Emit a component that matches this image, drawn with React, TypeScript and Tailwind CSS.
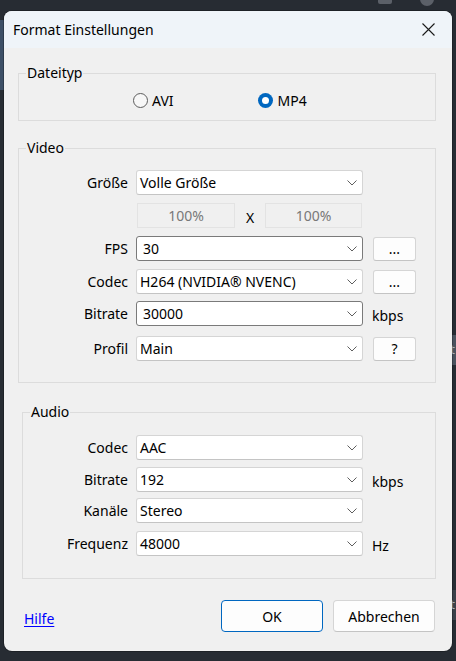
import React from 'react';

const font = { fontFamily: '"Noto Sans", "Open Sans", Arial, sans-serif' };

type ComboProps = {
  value: string;
  editable?: boolean;
};

// Windows-style drop-down; editable ones get the darker frame
const Combo: React.FC<ComboProps> = ({ value, editable }) => (
  <div
    className={`flex h-[25px] w-[227px] items-center rounded-[3px] border bg-white ${
      editable ? 'border-[#7a7a7a] pl-[6px]' : 'border-[#d5d5d5] border-b-[#c4c4c4] pl-[3px]'
    }`}
  >
    <span className="flex-1 text-[14px] leading-none text-black">{value}</span>
    <svg width="10" height="6" viewBox="0 0 10 6" className="mr-[5px]">
      <path d="M0.5 0.5 L5 5 L9.5 0.5" fill="none" stroke="#5f5f5f" strokeWidth="1" />
    </svg>
  </div>
);

const SmallButton: React.FC<{ label: string }> = ({ label }) => (
  <div className="ml-[10px] flex h-[24px] w-[43px] items-center justify-center rounded-[3px] border border-[#d5d5d5] border-b-[#c4c4c4] bg-[#fdfdfd] text-[14px] text-black">
    {label}
  </div>
);

type RowProps = {
  label: string;
  labelWidth: string;
  children: React.ReactNode;
  className?: string;
};

const Row: React.FC<RowProps> = ({ label, labelWidth, children, className }) => (
  <div className={`flex items-center ${className ?? ''}`}>
    <span className={`${labelWidth} pr-[8px] text-right text-[14px] text-black`}>{label}</span>
    {children}
  </div>
);

const Unit: React.FC<{ text: string }> = ({ text }) => (
  <span className="ml-[9px] mt-[3px] text-[14px] text-black">{text}</span>
);

export default function App() {
  return (
    <div className="relative h-[661px] w-[456px] overflow-hidden bg-[#272c33]" style={font}>
      {/* bits of the window behind the dialog */}
      <div className="absolute left-0 top-[20px] h-[70px] w-[4px] bg-[#3d4f66]" />
      <div className="absolute left-[440px] top-[335px] flex h-[30px] w-[16px] items-center justify-end bg-[#4a525e] pr-[1px] text-[13px] text-[#aab2bd]">st</div>
      <div className="absolute left-[440px] top-[590px] flex h-[30px] w-[16px] items-center justify-end bg-[#3a4049] pr-[1px] text-[13px] text-[#aab2bd]">st</div>
      <div className="absolute left-[378px] top-[-6px] h-[10px] w-[14px] rounded-[2px] bg-[#5b6068]" />
      <div className="absolute left-[420px] top-[-8px] h-[14px] w-[14px] rounded-full bg-[#5b6068]" />

      <div className="absolute left-[4px] top-[11px] flex h-[640px] w-[448px] flex-col overflow-hidden rounded-[8px] bg-[#f0f0f0] shadow-[0_0_0_1px_rgba(0,0,0,0.25)]">
        {/* title bar */}
        <div className="flex h-[37px] shrink-0 items-center bg-[#eff4f9] pl-[9px] pr-[17px]">
          <span className="flex-1 text-[14px] text-black">Format Einstellungen</span>
          <svg width="13" height="13" viewBox="0 0 13 13">
            <path d="M0.5 0.5 L12.5 12.5 M12.5 0.5 L0.5 12.5" stroke="#1a1a1a" strokeWidth="1.1" />
          </svg>
        </div>

        <div className="flex flex-col">
          {/* Dateityp */}
          <fieldset className="ml-[14px] mt-[15px] w-[418px] border border-[#dcdcdc] pb-[10px]">
            <legend className="ml-[7px] px-[1px] text-[14px] leading-[20px] text-black">Dateityp</legend>
            <div className="mt-[7px] flex h-[20px] items-center">
              <div className="ml-[114px] flex items-center">
                <span className="h-[15px] w-[15px] rounded-full border border-[#5c5c5c] bg-[#f7f7f7]" />
                <span className="ml-[4px] text-[14px] text-black">AVI</span>
              </div>
              <div className="ml-[84px] flex items-center">
                <span className="flex h-[15px] w-[15px] items-center justify-center rounded-full bg-[#0067c0]">
                  <span className="h-[7px] w-[7px] rounded-full bg-white" />
                </span>
                <span className="ml-[5px] text-[14px] text-black">MP4</span>
              </div>
            </div>
          </fieldset>

          {/* Video */}
          <fieldset className="ml-[14px] mt-[17px] w-[418px] border border-[#dcdcdc] pb-[21px]">
            <legend className="ml-[7px] px-[1px] text-[14px] leading-[20px] text-black">Video</legend>
            <Row label="Größe" labelWidth="w-[117px]" className="mt-[12px]">
              <Combo value="Volle Größe" />
            </Row>
            <div className="mt-[8px] flex items-center">
              <div className="ml-[118px] flex h-[25px] w-[98px] items-center justify-center border border-[#e3e3e3] text-[14px] text-[#787878]">
                100%
              </div>
              <span className="ml-[10px] mt-[4px] w-[10px] text-center text-[14px] text-black">X</span>
              <div className="ml-[10px] flex h-[25px] w-[97px] items-center justify-center border border-[#e3e3e3] text-[14px] text-[#787878]">
                100%
              </div>
            </div>
            <Row label="FPS" labelWidth="w-[117px]" className="mt-[8px]">
              <Combo value="30" editable />
              <SmallButton label="..." />
            </Row>
            <Row label="Codec" labelWidth="w-[117px]" className="mt-[8px]">
              <Combo value="H264 (NVIDIA® NVENC)" />
              <SmallButton label="..." />
            </Row>
            <Row label="Bitrate" labelWidth="w-[117px]" className="mt-[7px]">
              <Combo value="30000" editable />
              <Unit text="kbps" />
            </Row>
            <Row label="Profil" labelWidth="w-[117px]" className="mt-[10px]">
              <Combo value="Main" />
              <SmallButton label="?" />
            </Row>
          </fieldset>

          {/* Audio */}
          <fieldset className="ml-[18px] mt-[19px] w-[414px] border border-[#dcdcdc] pb-[22px]">
            <legend className="ml-[7px] px-[1px] text-[14px] leading-[20px] text-black">Audio</legend>
            <Row label="Codec" labelWidth="w-[113px]" className="mt-[13px]">
              <Combo value="AAC" />
            </Row>
            <Row label="Bitrate" labelWidth="w-[113px]" className="mt-[7px]">
              <Combo value="192" />
              <Unit text="kbps" />
            </Row>
            <Row label="Kanäle" labelWidth="w-[113px]" className="mt-[6px]">
              <Combo value="Stereo" />
            </Row>
            <Row label="Frequenz" labelWidth="w-[113px]" className="mt-[8px]">
              <Combo value="48000" />
              <Unit text="Hz" />
            </Row>
          </fieldset>

          {/* footer */}
          <div className="mt-[21px] flex items-center pl-[20px]">
            <span className="mt-[4px] flex-1 text-[14px] text-[#0000ff] underline underline-offset-2">Hilfe</span>
            <div className="flex h-[32px] w-[102px] items-center justify-center rounded-[4px] border border-[#0067c0] bg-[#fdfdfd] text-[14px] text-black">
              OK
            </div>
            <div className="ml-[10px] mr-[17px] flex h-[32px] w-[102px] items-center justify-center rounded-[4px] border border-[#d5d5d5] border-b-[#c4c4c4] bg-[#fdfdfd] text-[14px] text-black">
              Abbrechen
            </div>
          </div>
        </div>
      </div>
    </div>
  );
}
